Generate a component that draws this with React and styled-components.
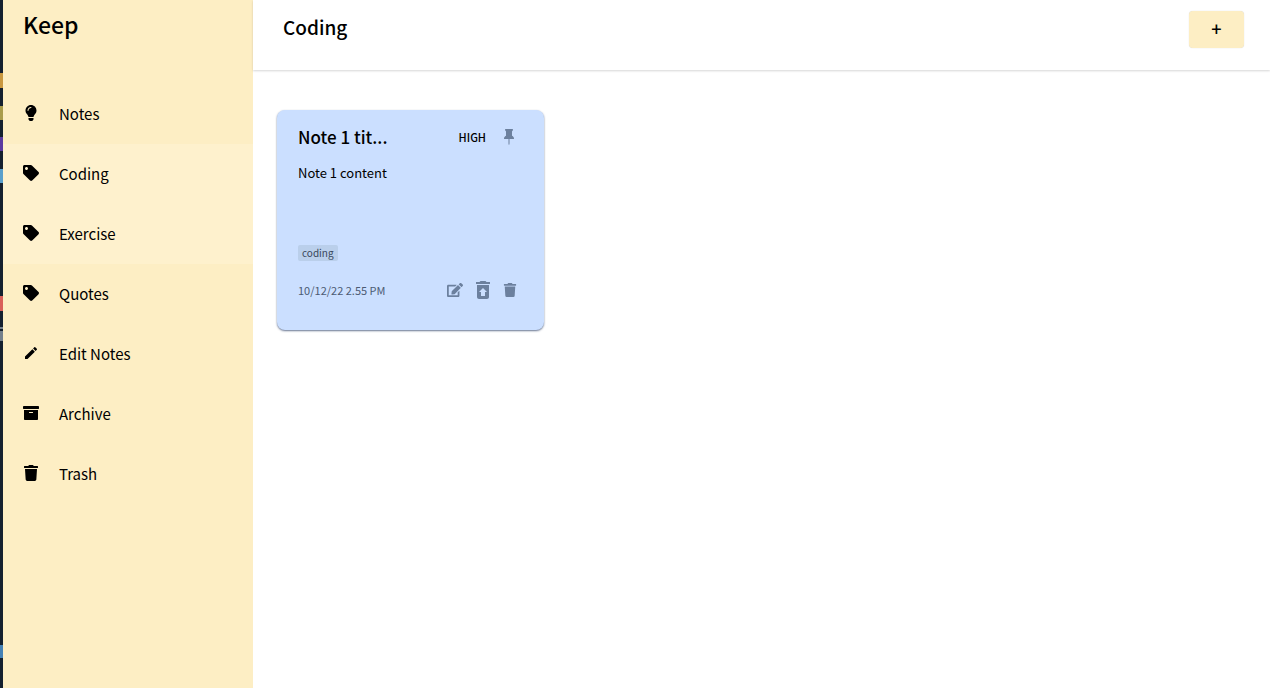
import React from "react";
import styled, { createGlobalStyle } from "styled-components";
import { FaLightbulb, FaTag, FaArchive, FaTrash, FaEdit } from "react-icons/fa";
import { MdEdit, MdRestoreFromTrash } from "react-icons/md";
import { BsPinFill } from "react-icons/bs";

const GlobalStyle = createGlobalStyle`
  *, *::before, *::after { box-sizing: border-box; }
  body {
    margin: 0;
    background: #fff;
    color: #000;
    font-family: "Noto Sans CJK KR", "Noto Sans", sans-serif;
    font-size: 15px;
  }
`;

const Shell = styled.div`
  display: flex;
  min-height: 100vh;
`;

const Backdrop = styled.div`
  flex: 0 0 3px;
  background: linear-gradient(
    #14202f 73px, #c9973f 73px 88px, #14202f 88px 106px, #a99c4c 106px 120px,
    #14202f 120px 137px, #5b3aa0 137px 151px, #14202f 151px 169px, #5a9fcb 169px 183px,
    #14202f 183px 296px, #d9605a 296px 311px, #14202f 311px 327px, #75808c 327px 329px,
    #14202f 329px 331px, #75808c 331px 341px, #14202f 341px 645px, #4581b5 645px 658px,
    #14202f 658px
  );
`;

const Sidebar = styled.aside`
  flex: 0 0 250px;
  background: #fdeec4;
`;

const Brand = styled.h1`
  margin: 0;
  height: 84px;
  padding: 8px 20px;
  font-size: 23px;
  line-height: 32px;
  font-weight: 500;
`;

const NavLink = styled.a`
  display: flex;
  align-items: center;
  gap: 20px;
  height: 60px;
  padding: 0 20px;
  color: inherit;
  text-decoration: none;
  line-height: 20px;
  background: ${(p) => (p.$lit ? "#fef1cd" : "transparent")};

  svg {
    width: 16px;
    height: 16px;
    margin-bottom: 2px;
  }
`;

const Main = styled.main`
  flex: 1;
  min-width: 0;
`;

const Header = styled.header`
  display: flex;
  justify-content: space-between;
  align-items: flex-start;
  height: 70px;
  padding: 11px 26px 0 30px;
  box-shadow: 0 1px 2px rgba(0, 0, 0, 0.16);
`;

const PageTitle = styled.h2`
  margin: 0;
  font-size: 19px;
  line-height: 32px;
  font-weight: 500;
`;

const AddButton = styled.button`
  width: 55px;
  height: 37px;
  padding: 0 0 4px;
  border: 0;
  border-radius: 4px;
  background: #fdeec4;
  box-shadow: 0 0 1px rgba(0, 0, 0, 0.2);
  color: #000;
  font: inherit;
  font-size: 18px;
  font-weight: 500;
  line-height: 32px;
`;

const Notes = styled.section`
  display: flex;
  flex-wrap: wrap;
  gap: 24px;
  padding: 40px 24px;
`;

const Card = styled.article`
  display: flex;
  flex-direction: column;
  width: 267px;
  height: 220px;
  padding: 11px 27px 27px 21px;
  border-radius: 8px;
  background: #cbdfff;
  box-shadow: 0 1px 2px rgba(40, 60, 100, 0.7);
`;

const CardTop = styled.div`
  display: flex;
  align-items: center;
  height: 32px;
`;

const CardTitle = styled.h3`
  flex: 1;
  margin: 0;
  font-size: 17px;
  line-height: 32px;
  font-weight: 500;
`;

const Priority = styled.span`
  font-size: 11px;
  line-height: 16px;
  font-weight: 500;
  margin-right: 15px;
`;

const IconButton = styled.button`
  display: flex;
  padding: 0;
  border: 0;
  background: none;
  color: #6c809e;
`;

const CardText = styled.p`
  margin: 10px 0 0;
  font-size: 13px;
  line-height: 20px;
`;

const Tag = styled.span`
  align-self: flex-start;
  margin-top: auto;
  padding: 0 4px;
  border-radius: 2px;
  background: #bacfeb;
  color: #39475c;
  font-size: 10px;
  line-height: 16px;
`;

const CardFoot = styled.footer`
  display: flex;
  justify-content: space-between;
  align-items: center;
  height: 26px;
  margin-top: 16px;
  color: #4c5b73;
  font-size: 11px;
`;

const Actions = styled.div`
  display: flex;
  align-items: center;
  gap: 8px;
`;

const navItems = [
  { label: "Notes", Icon: FaLightbulb },
  { label: "Coding", Icon: FaTag, lit: true },
  { label: "Exercise", Icon: FaTag, lit: true },
  { label: "Quotes", Icon: FaTag },
  { label: "Edit Notes", Icon: MdEdit },
  { label: "Archive", Icon: FaArchive },
  { label: "Trash", Icon: FaTrash },
];

export default function App() {
  return (
    <>
      <GlobalStyle />
      <Shell>
        <Backdrop />
        <Sidebar>
          <Brand>Keep</Brand>
          <nav>
            {navItems.map(({ label, Icon, lit }) => (
              <NavLink key={label} href="#" $lit={lit}>
                <Icon />
                {label}
              </NavLink>
            ))}
          </nav>
        </Sidebar>
        <Main>
          <Header>
            <PageTitle>Coding</PageTitle>
            <AddButton aria-label="Add note">+</AddButton>
          </Header>
          <Notes>
            <Card>
              <CardTop>
                <CardTitle>Note 1 tit...</CardTitle>
                <Priority>HIGH</Priority>
                <IconButton aria-label="Pin"><BsPinFill size={16} /></IconButton>
              </CardTop>
              <CardText>Note 1 content</CardText>
              <Tag>coding</Tag>
              <CardFoot>
                <time>10/12/22 2.55 PM</time>
                <Actions>
                  <IconButton aria-label="Edit"><FaEdit size={16} /></IconButton>
                  <IconButton aria-label="Archive"><MdRestoreFromTrash size={24} /></IconButton>
                  <IconButton aria-label="Delete"><FaTrash size={14} /></IconButton>
                </Actions>
              </CardFoot>
            </Card>
          </Notes>
        </Main>
      </Shell>
    </>
  );
}
